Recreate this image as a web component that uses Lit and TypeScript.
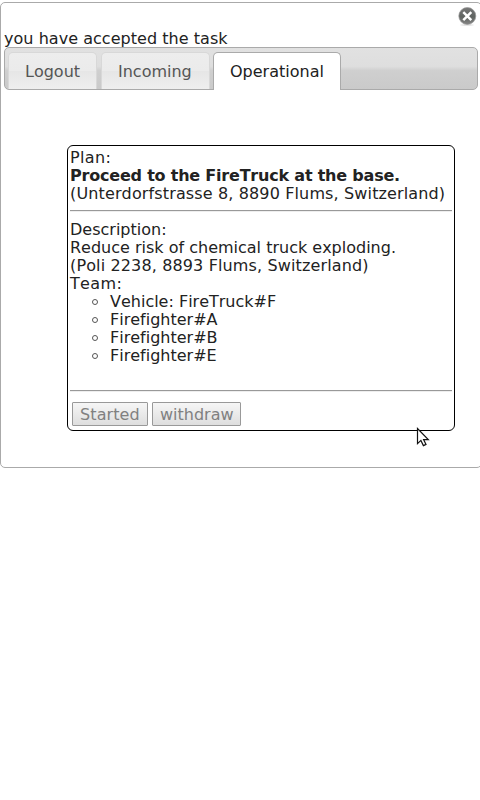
import { LitElement, html, css } from "lit";
import { customElement, state } from "lit/decorators.js";

@customElement("app-root")
export class AppRoot extends LitElement {
  @state() private active = 2;
  private tabs = ["Logout", "Incoming", "Operational"];
  private team = ["Vehicle: FireTruck#F", "Firefighter#A", "Firefighter#B", "Firefighter#E"];

  static styles = css`
    :host { display: block; width: 480px; height: 800px; overflow: hidden; position: relative;
      background: #fff; color: #222; font: 16px/18px "DejaVu Sans", sans-serif;
      font-kerning: none; font-variant-ligatures: none; }
    *, *::before { box-sizing: border-box; }
    .panel { width: 482px; height: 466px; margin-top: 2px; border: 1px solid #aaa; border-radius: 5px;
      padding: 3px; display: flex; flex-direction: column; overflow: hidden; }
    .top { height: 24px; flex: none; display: flex; justify-content: flex-end; }
    .close { width: 20px; height: 20px; margin-right: 1px; }
    .message { height: 17px; flex: none; white-space: nowrap; letter-spacing: .04px; }
    .tabs { width: 474px; height: 43px; flex: none; border: 1px solid #aaa; border-radius: 5px;
      padding: 4px 3px 0; display: flex; align-items: flex-start; gap: 4px;
      background: linear-gradient(#e1e1e1 0, #dedede 45%, #cfcfcf 55%, #cacaca 100%); }
    .tab { height: 37px; border: 1px solid #d8d8d8; border-bottom: 0; border-radius: 5px 5px 0 0;
      padding: 10px 16px 0; color: #555; white-space: nowrap;
      background: linear-gradient(#ededed 0, #ebebeb 49%, #e6e6e6 51%, #efefef 100%); }
    .tab:nth-child(1) { width: 89px; }
    .tab:nth-child(2) { width: 109px; margin-right: -1px; }
    .tab:nth-child(3) { width: 128px; }
    .tab.active { height: 38px; border-color: #aaa; background: #fff; color: #212121; }
    .card { width: 388px; height: 286px; flex: none; margin: 55px 0 0 63px; border: 1px solid #000;
      border-radius: 6px; padding: 3px 2px 2px; white-space: nowrap; }
    .label { letter-spacing: .35px; }
    .address { letter-spacing: .135px; }
    .bold { font-weight: bold; letter-spacing: -.21px; }
    hr { height: 2px; margin: 7px 0 9px; border: 0; border-top: 1px solid #999; border-bottom: 1px solid #eee; }
    ul { list-style: none; margin: 0 0 25px; padding: 0 0 0 40px; }
    li { display: flex; align-items: center; }
    li::before { content: ""; flex: none; width: 6px; height: 6px; border: 1px solid #555; border-radius: 50%;
      margin: 0 12px 0 -18px; }
    .buttons { display: flex; gap: 4px; padding: 1px 2px 0; }
    .button { height: 24px; border: 1px solid #999; border-radius: 1px; padding: 3px 7px; color: #808080;
      background: linear-gradient(#f6f6f6, #dedede); }
    .button:nth-child(1) { width: 76px; letter-spacing: .1px; }
    .button:nth-child(2) { width: 89px; }
    .cursor { position: absolute; left: 416px; top: 427px; width: 14px; height: 21px; }
  `;

  render() {
    return html`
      <div class="panel">
        <div class="top">
          <svg class="close" viewBox="0 0 20 20">
            <defs><linearGradient id="g" x1="0" y1="0" x2="0" y2="1">
              <stop offset="0" stop-color="#777"/><stop offset=".55" stop-color="#606461"/><stop offset="1" stop-color="#858585"/>
            </linearGradient></defs>
            <ellipse cx="10" cy="19" rx="7" ry=".7" fill="#ddd"/>
            <circle cx="10.3" cy="10" r="8.5" fill="url(#g)" stroke="#999" stroke-width=".7"/>
            <path d="M6.3 6.2l8 8m0-8l-8 8" stroke="#fff" stroke-width="2.5"/>
          </svg>
        </div>
        <div class="message">you have accepted the task</div>
        <div class="tabs">
          ${this.tabs.map((t, i) => html`<div class="tab ${i === this.active ? "active" : ""}" @click=${() => (this.active = i)}>${t}</div>`)}
        </div>
        <div class="card">
          <div class="label">Plan:</div>
          <div class="bold">Proceed to the FireTruck at the base.</div>
          <div class="address">(Unterdorfstrasse 8, 8890 Flums, Switzerland)</div>
          <hr>
          <div>Description:</div>
          <div>Reduce risk of chemical truck exploding.</div>
          <div class="address">(Poli 2238, 8893 Flums, Switzerland)</div>
          <div class="label">Team:</div>
          <ul>${this.team.map((m) => html`<li>${m}</li>`)}</ul>
          <hr>
          <div class="buttons"><div class="button">Started</div><div class="button">withdraw</div></div>
        </div>
      </div>
      <svg class="cursor" viewBox="0 0 14 21">
        <path d="M1.5 1.5v15.2l3.4-3.3 2.5 5.2 2.6-1.2-2.4-4.8h4.7z" fill="#fff" stroke="#111" stroke-width="1.2"/>
      </svg>
    `;
  }
}
